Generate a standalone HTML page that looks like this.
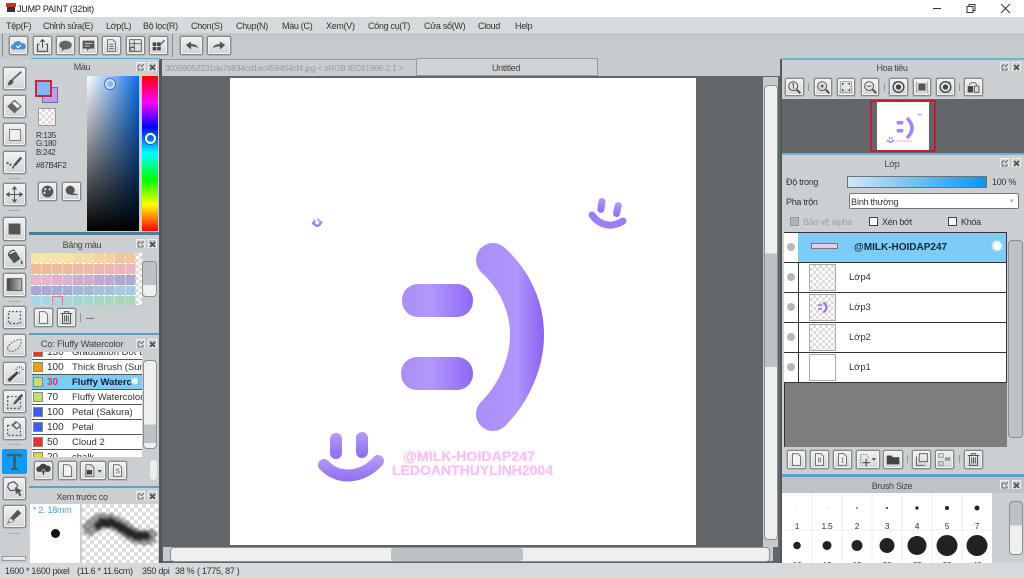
<!DOCTYPE html>
<html><head><meta charset="utf-8"><style>
html,body{margin:0;padding:0}
body{width:1024px;height:578px;overflow:hidden;position:relative;background:#c5cacd;font-family:"Liberation Sans","Noto Sans CJK JP",sans-serif;font-size:9px;letter-spacing:-.3px;color:#333}
.a{position:absolute}
.t{position:absolute;white-space:nowrap;line-height:12px}
.b{position:absolute;box-sizing:border-box;border:1px solid #83888b;border-radius:2px;background:linear-gradient(#f2f3f3,#d0d3d5);box-shadow:inset 0 0 0 1px #f4f4f4,0 0 0 1px rgba(130,135,138,.35)}
.b svg,.s svg{position:absolute;left:0;top:0;width:100%;height:100%}
.chk{background-color:#fff;background-image:linear-gradient(45deg,#ddd 25%,transparent 25%,transparent 75%,#ddd 75%),linear-gradient(45deg,#ddd 25%,transparent 25%,transparent 75%,#ddd 75%);background-size:6px 6px;background-position:0 0,3px 3px}
.title{position:absolute;text-align:center;color:#444;line-height:14px}
.pb{position:absolute;width:9px;height:9px;background:#d6dadc;border:1px solid #eee;box-sizing:border-box}
.row{position:absolute;left:32px;width:110px;height:15px;background:#fff;border-bottom:1px solid #555;box-sizing:border-box;letter-spacing:0}
.row i{position:absolute;left:1px;top:2px;width:10px;height:10px;border:1px solid #888;box-sizing:border-box}
.row b{position:absolute;left:15px;top:2px;font-weight:normal;line-height:12px;font-size:10px}
.row u{position:absolute;left:40px;top:2px;text-decoration:none;line-height:12px;font-size:9.5px;white-space:nowrap;width:70px;overflow:hidden}
.l{position:absolute;left:784px;width:223px;height:30px;background:#fff;border-bottom:1px solid #333;box-sizing:border-box}
.l i{position:absolute;left:3px;top:10px;width:8px;height:8px;border-radius:50%;background:#b4b8ba}
.l s{position:absolute;left:14px;top:0;width:1px;height:30px;background:#333}
.l em{position:absolute;left:25px;top:1px;width:27px;height:27px;box-sizing:border-box;border:1px solid #aaa}
.l span{position:absolute;left:65px;top:9px;font-size:9.5px;color:#333;letter-spacing:-.1px}
.sc{position:absolute;border:1px solid #8b8f92;border-radius:4px;box-sizing:border-box;background:#eef0f0}
</style></head><body>

<!-- title bar -->
<div class="a" style="left:0;top:0;width:1024px;height:17px;background:#fff"></div>
<svg class="a" style="left:6px;top:3px" width="10" height="10"><rect x="0" y="0" width="10" height="4" fill="#c33"/><rect x="1" y="4" width="8" height="5" fill="#333"/></svg>
<div class="t" style="left:17px;top:3px;color:#222;letter-spacing:-.2px">JUMP PAINT (32bit)</div>
<svg class="a" style="left:930px;top:0" width="94" height="17" fill="none" stroke="#333"><path d="M3 8.500h8"/><path d="M37 6.500h6v6h-6zM39 6.500v-2h6v6h-2"/><path d="M71 4l9 9M80 4l-9 9"/></svg>

<!-- menu -->
<div class="a" style="left:0;top:17px;width:1024px;height:16px;background:#d6dadc"></div>
<div class="t" style="left:6px;top:20px">Tệp(F)</div>
<div class="t" style="left:43px;top:20px">Chỉnh sửa(E)</div>
<div class="t" style="left:106px;top:20px">Lớp(L)</div>
<div class="t" style="left:143px;top:20px">Bộ lọc(R)</div>
<div class="t" style="left:191px;top:20px">Chọn(S)</div>
<div class="t" style="left:236px;top:20px">Chụp(N)</div>
<div class="t" style="left:282px;top:20px">Màu (C)</div>
<div class="t" style="left:326px;top:20px">Xem(V)</div>
<div class="t" style="left:368px;top:20px">Công cụ(T)</div>
<div class="t" style="left:424px;top:20px">Cửa sổ(W)</div>
<div class="t" style="left:478px;top:20px">Cloud</div>
<div class="t" style="left:515px;top:20px">Help</div>

<!-- toolbar -->
<div class="a" style="left:2px;top:34px;width:1px;height:23px;background:#8a8e90"></div>
<div class="b" style="left:9px;top:36px;width:19px;height:19px"><svg viewBox="0 0 19 19"><path d="M4 14a3 3 0 0 1 0-6 5 5 0 0 1 9-1 3.500 3.500 0 0 1 2 7z" fill="#4a90d0"/><path d="M7 10l2 2 3-3" stroke="#fff" fill="none" stroke-width="1.300"/></svg></div>
<div class="b" style="left:33px;top:36px;width:19px;height:19px"><svg viewBox="0 0 19 19" fill="none" stroke="#333"><path d="M6 8H4v8h11V8h-2M9.500 12V3M7 5.500l2.500-2.500 2.500 2.500"/></svg></div>
<div class="b" style="left:56px;top:36px;width:19px;height:19px"><svg viewBox="0 0 19 19"><ellipse cx="9.500" cy="9" rx="7" ry="5" fill="#666"/><path d="M6 12l-1 4 5-3z" fill="#666"/></svg></div>
<div class="b" style="left:79px;top:36px;width:19px;height:19px"><svg viewBox="0 0 19 19"><path d="M3 4h13v9h-6l-2 3v-3H3z" fill="#555"/><path d="M5 7h9M5 10h6" stroke="#ddd"/></svg></div>
<div class="b" style="left:102px;top:36px;width:19px;height:19px"><svg viewBox="0 0 19 19" fill="none" stroke="#666"><path d="M5 3h6l3 3v10H5zM7 8h5M7 10.500h5M7 13h5"/></svg></div>
<div class="b" style="left:126px;top:36px;width:19px;height:19px"><svg viewBox="0 0 19 19" fill="none" stroke="#555"><path d="M3 3h13v13H3zM3 7.500h13M3 12h6M8 3v9"/><circle cx="6" cy="13.500" r="2.500"/></svg></div>
<div class="b" style="left:149px;top:36px;width:19px;height:19px"><svg viewBox="0 0 19 19"><path d="M3 6h4v4H3zM8 6h4v4H8zM3 11h4v4H3zM8 11h4v4H8z" fill="#444"/><path d="M11 8l5-5 1 1-5 5z" fill="#666"/></svg></div>
<div class="a" style="left:172px;top:34px;width:1px;height:23px;background:#8a8e90"></div>
<div class="b" style="left:180px;top:36px;width:23px;height:19px"><svg viewBox="0 0 23 19"><path d="M5 9l6-4v3c4 0 7 1 8 5-2-2-4-2.500-8-2.500V14z" fill="#555"/></svg></div>
<div class="b" style="left:207px;top:36px;width:24px;height:19px"><svg viewBox="0 0 24 19"><path d="M19 9l-6-4v3c-4 0-7 1-8 5 2-2 4-2.500 8-2.500V14z" fill="#555"/></svg></div>

<!-- left tool column -->
<div class="a" style="left:0;top:59px;width:29px;height:504px;background:#cbcfd2"></div>
<div class="b" style="left:3px;top:67px;width:23px;height:23px"><svg viewBox="0 0 23 23"><path d="M19 4L9 13" stroke="#666" stroke-width="2"/><path d="M4 19c1-5 3-7 6-6 1 3-1 6-6 6z" fill="#555"/></svg></div>
<div class="b" style="left:3px;top:95px;width:23px;height:23px"><svg viewBox="0 0 23 23"><path d="M11.500 4l8 7.500-8 7.500-8-7.500z" fill="#666"/><path d="M9 8l6 5.500 2.500-2.500-6-5z" fill="#f5f5f5"/></svg></div>
<div class="b" style="left:3px;top:123px;width:23px;height:23px"><svg viewBox="0 0 23 23"><rect x="6" y="6" width="12" height="12" fill="#eee" stroke="#777"/></svg></div>
<div class="b" style="left:3px;top:151px;width:23px;height:23px"><svg viewBox="0 0 23 23" fill="#555"><path d="M18 5l2 2-7 8-3 1 1-3z"/><circle cx="4" cy="12" r="1.200"/><circle cx="7" cy="14" r="1.200"/><circle cx="10" cy="17" r="1.200"/></svg></div>
<div class="a" style="left:9px;top:178px;width:11px;height:1px;background:#aaa"></div>
<div class="b" style="left:3px;top:183px;width:23px;height:23px"><svg viewBox="0 0 23 23" fill="#555"><path d="M11 5h1v13h-1zM5 11h13v1H5z"/><path d="M11.500 2l3 4h-6zM11.500 21l3-4h-6zM2 11.500l4-3v6zM21 11.500l-4-3v6z"/></svg></div>
<div class="a" style="left:9px;top:210px;width:11px;height:1px;background:#aaa"></div>
<div class="b" style="left:3px;top:217px;width:23px;height:24px"><svg viewBox="0 0 23 24"><rect x="5" y="6" width="13" height="12" fill="#555"/></svg></div>
<div class="b" style="left:3px;top:245px;width:23px;height:24px"><svg viewBox="0 0 23 24"><path d="M4 10l7 9 7-5-5-8z" fill="#555"/><path d="M5 10c0-4 4-6 7-5" fill="none" stroke="#555" stroke-width="1.500"/><path d="M19 15c1 2 2 3 1 5-2 0-2-3-1-5z" fill="#555"/></svg></div>
<div class="b" style="left:3px;top:273px;width:23px;height:24px"><svg viewBox="0 0 23 24"><defs><linearGradient id="g1"><stop offset="0" stop-color="#444"/><stop offset="1" stop-color="#bbb"/></linearGradient></defs><rect x="3.500" y="5" width="16" height="13" fill="url(#g1)" stroke="#555"/></svg></div>
<div class="a" style="left:9px;top:301px;width:11px;height:1px;background:#aaa"></div>
<div class="b" style="left:3px;top:306px;width:23px;height:23px"><svg viewBox="0 0 23 23"><rect x="5" y="5" width="13" height="13" fill="none" stroke="#555" stroke-dasharray="2 2" stroke-width="1.500"/></svg></div>
<div class="b" style="left:3px;top:334px;width:23px;height:23px"><svg viewBox="0 0 23 23"><path d="M4 15c0-5 9-10 14-10 3 3-2 12-9 13-3 0-5-1-5-3z" fill="none" stroke="#777" stroke-dasharray="2 1.500" stroke-width="1.300"/></svg></div>
<div class="b" style="left:3px;top:362px;width:23px;height:23px"><svg viewBox="0 0 23 23"><path d="M4 18L14 9l2 2-10 10z" fill="#444"/><path d="M17 3v3M17 9v3M12 7h3M19 7h3M14 4l1.500 1.500M20 4l-1.500 1.500" stroke="#888"/></svg></div>
<div class="b" style="left:3px;top:390px;width:23px;height:23px"><svg viewBox="0 0 23 23"><rect x="4" y="6" width="14" height="13" fill="none" stroke="#555" stroke-dasharray="2 2" stroke-width="1.300"/><path d="M19 3l2 2-8 9-3 1 1-3z" fill="#555"/></svg></div>
<div class="b" style="left:3px;top:417px;width:23px;height:23px"><svg viewBox="0 0 23 23"><rect x="4" y="8" width="14" height="11" fill="none" stroke="#555" stroke-dasharray="2 2" stroke-width="1.300"/><path d="M13 3l6 5-5 5-6-5z" fill="#666"/><path d="M14 5l3 3-3 3-3-3z" fill="#eee"/></svg></div>
<div class="a" style="left:9px;top:444px;width:11px;height:1px;background:#aaa"></div>
<div class="a" style="left:2px;top:449px;width:25px;height:25px;background:#0f9bf2;border-radius:2px"></div>
<svg class="a" style="left:2px;top:449px" width="25" height="25"><path d="M5 5h15v3h-2l-1-1h-3v12h2v2H9v-2h2V7H8L7 8H5z" fill="#4a5a66"/></svg>
<div class="b" style="left:3px;top:477px;width:23px;height:23px"><svg viewBox="0 0 23 23"><path d="M5 6l6-2 4 4-2 5-6 1-3-4z" fill="none" stroke="#555" stroke-width="1.300"/><path d="M12 10l8 4-3 1 2 4-2 1-2-4-2 2z" fill="#555"/></svg></div>
<div class="b" style="left:3px;top:505px;width:23px;height:23px"><svg viewBox="0 0 23 23"><path d="M4 19l3-6 8-9 4 4-9 8z" fill="#555"/><path d="M4 19l3-6 4 3z" fill="#f3f3f3" stroke="#555" stroke-width=".7"/></svg></div>
<div class="a" style="left:9px;top:533px;width:11px;height:1px;background:#aaa"></div>
<div class="a" style="left:2px;top:556px;width:24px;height:5px;background:#e8eaea;border:1px solid #999;box-sizing:border-box"></div>

<!-- left panels bg -->
<div class="a" style="left:29px;top:59px;width:131px;height:504px;background:#cbcfd2"></div>
<div class="a" style="left:31px;top:58px;width:128px;height:1px;background:#5ea6cf"></div>
<div class="a" style="left:159px;top:59px;width:3px;height:504px;background:#54585a"></div>

<!-- colour panel -->
<div class="title" style="left:29px;top:60px;width:106px">Màu</div>
<div class="pb" style="left:136px;top:62px"></div><div class="pb" style="left:148px;top:62px;background:#c4c8ca"></div>
<svg class="a" style="left:136px;top:62px" width="23" height="10" fill="none" stroke="#666"><path d="M2 3h3M2 3v5h5V6M5 5l3-3"/><path d="M14 3l5 5M19 3l-5 5" stroke="#444" stroke-width="1.500"/></svg>
<div class="a" style="left:42px;top:87px;width:16px;height:16px;background:#bd9cf3;border:1px solid #7a6a8e;box-sizing:border-box"></div>
<div class="a chk" style="left:38px;top:108px;width:18px;height:18px;border:1px solid #999;box-sizing:border-box"></div>
<div class="a" style="left:35px;top:80px;width:17px;height:17px;background:#87b4f2;border:2px solid #c3283c;box-sizing:border-box"></div>
<div class="t" style="left:36px;top:132px;font-size:8px;line-height:8.300px;white-space:normal;width:30px">R:135<br>G:180<br>B:242</div>
<div class="t" style="left:36px;top:160px;font-size:8px">#87B4F2</div>
<div class="b" style="left:38px;top:182px;width:19px;height:19px"><svg viewBox="0 0 19 19"><circle cx="9.500" cy="9.500" r="6.500" fill="#555"/><circle cx="7" cy="7" r="1.300" fill="#ddd"/><circle cx="12" cy="7" r="1.300" fill="#ddd"/><circle cx="6" cy="11" r="1.300" fill="#ddd"/></svg></div>
<div class="b" style="left:62px;top:182px;width:19px;height:19px"><svg viewBox="0 0 19 19"><circle cx="8" cy="8" r="5" fill="#555"/><path d="M9 12h7v1.500H9z" fill="#555"/></svg></div>
<div class="a" style="left:87px;top:76px;width:52px;height:155px;background:linear-gradient(to top,#000,rgba(0,0,0,0)),linear-gradient(to right,#fff,#0a6de6)"></div>
<div class="a" style="left:105px;top:79px;width:10px;height:10px;border:2px solid #cfe0f8;border-radius:50%;box-sizing:border-box;box-shadow:0 0 0 1px #4a77b5"></div>
<div class="a" style="left:142px;top:76px;width:16px;height:155px;background:linear-gradient(#f00,#f0f 17%,#00f 33%,#0ff 50%,#0f0 67%,#ff0 83%,#f00)"></div>
<div class="a" style="left:145px;top:133px;width:11px;height:11px;border:2px solid #fff;border-radius:50%;box-sizing:border-box;box-shadow:0 0 0 1px #06a"></div>

<!-- swatches -->
<div class="a" style="left:29px;top:232px;width:130px;height:3px;background:#4f7c98"></div>
<div class="title" style="left:29px;top:238px;width:106px">Bảng màu</div>
<div class="pb" style="left:136px;top:239px"></div><div class="pb" style="left:148px;top:239px;background:#c4c8ca"></div>
<svg class="a" style="left:136px;top:239px" width="23" height="10" fill="none" stroke="#666"><path d="M2 3h3M2 3v5h5V6M5 5l3-3"/><path d="M14 3l5 5M19 3l-5 5" stroke="#444" stroke-width="1.500"/></svg>
<div class="a chk" style="left:31px;top:253px;width:111px;height:52px"></div>
<svg class="a" style="left:31px;top:253px" width="106" height="52" shape-rendering="crispEdges">
<g fill="#f4e6a8"><rect x="0" y="0" width="10" height="10"/><rect x="10.500" y="0" width="10" height="10"/></g>
<g fill="#f5e4a8"><rect x="21" y="0" width="10" height="10"/><rect x="31.500" y="0" width="10" height="10"/></g>
<g fill="#f4dca4"><rect x="42" y="0" width="10" height="10"/><rect x="52.500" y="0" width="10" height="10"/></g>
<g fill="#f2d4a2"><rect x="63" y="0" width="10" height="10"/><rect x="73.500" y="0" width="10" height="10"/></g>
<g fill="#f0c8a0"><rect x="84" y="0" width="10" height="10"/><rect x="94.500" y="0" width="10" height="10"/></g>
<g fill="#f0bc9c"><rect x="0" y="11" width="10" height="10"/><rect x="10.500" y="11" width="10" height="10"/></g>
<g fill="#f0bca0"><rect x="21" y="11" width="10" height="10"/><rect x="31.500" y="11" width="10" height="10"/></g>
<g fill="#efb9a8"><rect x="42" y="11" width="10" height="10"/><rect x="52.500" y="11" width="10" height="10"/></g>
<g fill="#edb6b0"><rect x="63" y="11" width="10" height="10"/><rect x="73.500" y="11" width="10" height="10"/></g>
<g fill="#ebb6c0"><rect x="84" y="11" width="10" height="10"/><rect x="94.500" y="11" width="10" height="10"/></g>
<g fill="#e7b6cc"><rect x="0" y="22" width="10" height="10"/><rect x="10.500" y="22" width="10" height="10"/></g>
<g fill="#dcb4d0"><rect x="21" y="22" width="10" height="10"/><rect x="31.500" y="22" width="10" height="10"/></g>
<g fill="#ccaed0"><rect x="42" y="22" width="10" height="10"/><rect x="52.500" y="22" width="10" height="10"/></g>
<g fill="#bcaad0"><rect x="63" y="22" width="10" height="10"/><rect x="73.500" y="22" width="10" height="10"/></g>
<g fill="#aca8d0"><rect x="84" y="22" width="10" height="10"/><rect x="94.500" y="22" width="10" height="10"/></g>
<g fill="#a8a8d2"><rect x="0" y="33" width="10" height="9"/><rect x="10.500" y="33" width="10" height="9"/></g>
<g fill="#a4aed6"><rect x="21" y="33" width="10" height="9"/><rect x="31.500" y="33" width="10" height="9"/></g>
<g fill="#a4b8da"><rect x="42" y="33" width="10" height="9"/><rect x="52.500" y="33" width="10" height="9"/></g>
<g fill="#a4c2de"><rect x="63" y="33" width="10" height="9"/><rect x="73.500" y="33" width="10" height="9"/></g>
<g fill="#a4cce4"><rect x="84" y="33" width="10" height="9"/><rect x="94.500" y="33" width="10" height="9"/></g>
<g fill="#a4d8e6"><rect x="0" y="43" width="10" height="9"/><rect x="10.500" y="43" width="10" height="9"/></g>
<g fill="#a4d8dc"><rect x="21" y="43" width="10" height="9"/><rect x="31.500" y="43" width="10" height="9"/></g>
<g fill="#a4d8d0"><rect x="42" y="43" width="10" height="9"/><rect x="52.500" y="43" width="10" height="9"/></g>
<g fill="#a6d8c4"><rect x="63" y="43" width="10" height="9"/><rect x="73.500" y="43" width="10" height="9"/></g>
<g fill="#a8d8b8"><rect x="84" y="43" width="10" height="9"/><rect x="94.500" y="43" width="10" height="9"/></g>
<path d="M21.500 52V43.500h10V52" fill="none" stroke="#e07a8a"/>
</svg>
<div class="sc" style="left:142px;top:261px;width:15px;height:36px;background:linear-gradient(#bec2c5 68%,#eef0f0 68%)"></div>
<div class="b" style="left:34px;top:308px;width:19px;height:19px"><svg viewBox="0 0 19 19" fill="#f3f3f3" stroke="#666"><path d="M5 3h6l3 3v10H5z"/></svg></div>
<div class="b" style="left:57px;top:308px;width:19px;height:19px"><svg viewBox="0 0 19 19" fill="none" stroke="#444"><path d="M3 5h13M7 5V3h5v2M5 5v11h9V5M7.500 7v7M9.500 7v7M11.500 7v7"/></svg></div>
<div class="a" style="left:80px;top:313px;width:1px;height:9px;background:#999"></div>
<div class="t" style="left:86px;top:312px;font-size:9px">---</div>

<!-- brushes -->
<div class="a" style="left:29px;top:333px;width:130px;height:2px;background:#5e9fc4"></div>
<div class="title" style="left:29px;top:338px;width:106px;font-size:9.500px">Cọ: Fluffy Watercolor</div>
<div class="pb" style="left:136px;top:339px"></div><div class="pb" style="left:148px;top:339px;background:#c4c8ca"></div>
<svg class="a" style="left:136px;top:339px" width="23" height="10" fill="none" stroke="#666"><path d="M2 3h3M2 3v5h5V6M5 5l3-3"/><path d="M14 3l5 5M19 3l-5 5" stroke="#444" stroke-width="1.500"/></svg>
<div class="a" style="left:32px;top:352px;width:110px;height:105px;overflow:hidden;background:#fff">
<div class="row" style="left:0;top:-7px"><i style="background:#e33"></i><b>130</b><u>Graduation Dot Bi</u></div>
<div class="row" style="left:0;top:8px"><i style="background:#f5a000"></i><b>100</b><u>Thick Brush (Sum</u></div>
<div class="row" style="left:0;top:23px;background:#7dccf8"><i style="background:#bfe36a"></i><b style="color:#d83a4a;font-weight:bold">30</b><u style="font-weight:bold;color:#123">Fluffy Waterc</u><span class="a" style="left:98px;top:2px;color:#fff;font-size:11px;line-height:11px">✸</span></div>
<div class="row" style="left:0;top:38px"><i style="background:#bfe36a"></i><b>70</b><u>Fluffy Watercolor</u></div>
<div class="row" style="left:0;top:53px"><i style="background:#3a5cf0"></i><b>100</b><u>Petal (Sakura)</u></div>
<div class="row" style="left:0;top:68px"><i style="background:#3a5cf0"></i><b>100</b><u>Petal</u></div>
<div class="row" style="left:0;top:83px"><i style="background:#f03030"></i><b>50</b><u>Cloud 2</u></div>
<div class="row" style="left:0;top:98px"><i style="background:#e8d820"></i><b>20</b><u>chalk</u></div>
</div>
<div class="sc" style="left:143px;top:360px;width:14px;height:89px;background:linear-gradient(#eef0f0 73%,#bec2c5 73%,#bec2c5 94%,#eef0f0 94%)"></div>
<div class="b" style="left:34px;top:461px;width:19px;height:19px"><svg viewBox="0 0 19 19"><path d="M4 11a3 3 0 0 1 1-6 4.500 4.500 0 0 1 8-1 3.500 3.500 0 0 1 2 7z" fill="#444"/><path d="M9.500 8l3 4h-2v3h-2v-3h-2z" fill="#444" stroke="#eee" stroke-width=".6"/></svg></div>
<div class="b" style="left:58px;top:461px;width:19px;height:19px"><svg viewBox="0 0 19 19" fill="#f3f3f3" stroke="#666"><path d="M5 3h6l3 3v10H5z"/></svg></div>
<div class="b" style="left:80px;top:461px;width:26px;height:19px"><svg viewBox="0 0 26 19"><path d="M5 3h6l3 3v10H5z" fill="#ddd" stroke="#666"/><rect x="6" y="9" width="6" height="5" fill="#444"/><path d="M18 9h5l-2.500 3z" fill="#555"/></svg></div>
<div class="b" style="left:108px;top:461px;width:19px;height:19px"><svg viewBox="0 0 19 19"><path d="M5 3h6l3 3v10H5z" fill="#eee" stroke="#666"/><text x="9.500" y="13" font-size="8" text-anchor="middle" fill="#555" font-family="Liberation Sans">S</text></svg></div>
<div class="sc" style="left:150px;top:460px;width:7px;height:20px;border:none;background:#eceeee"></div>

<!-- preview -->
<div class="a" style="left:29px;top:486px;width:130px;height:2px;background:#5e9fc4"></div>
<div class="title" style="left:29px;top:490px;width:106px">Xem trước cọ</div>
<div class="pb" style="left:136px;top:491px"></div><div class="pb" style="left:148px;top:491px;background:#c4c8ca"></div>
<svg class="a" style="left:136px;top:491px" width="23" height="10" fill="none" stroke="#666"><path d="M2 3h3M2 3v5h5V6M5 5l3-3"/><path d="M14 3l5 5M19 3l-5 5" stroke="#444" stroke-width="1.500"/></svg>
<div class="a" style="left:30px;top:504px;width:50px;height:59px;background:#fff"></div>
<div class="t" style="left:33px;top:504px;color:#4aa3d8;font-size:9px">* 2. 18mm</div>
<div class="a" style="left:51px;top:529px;width:9px;height:9px;border-radius:50%;background:#111"></div>
<div class="a chk" style="left:82px;top:504px;width:76px;height:59px;background-size:8px 8px;background-position:0 0,4px 4px"></div>
<svg class="a" style="left:82px;top:504px" width="76" height="59"><defs><filter id="f" x="-20%" y="-50%" width="140%" height="200%"><feTurbulence type="fractalNoise" baseFrequency=".25" numOctaves="2" seed="4"/><feDisplacementMap in="SourceGraphic" scale="7"/><feGaussianBlur stdDeviation="1.300"/></filter></defs><path d="M8 24C16 15 28 14 40 23S58 36 68 32" fill="none" stroke="#555" stroke-width="15" stroke-linecap="round" filter="url(#f)" opacity=".6"/><path d="M16 21C22 17 30 17 40 24S56 34 64 32" fill="none" stroke="#111" stroke-width="8" stroke-linecap="round" filter="url(#f)" opacity=".8"/></svg>

<!-- status bar -->
<div class="a" style="left:0;top:563px;width:1024px;height:15px;background:#d6dadc"></div>
<div class="t" style="left:5px;top:565px">1600 * 1600 pixel</div>
<div class="t" style="left:77px;top:565px">(11.6 * 11.6cm)</div>
<div class="t" style="left:142px;top:565px">350 dpi</div>
<div class="t" style="left:175px;top:565px">38 %</div>
<div class="t" style="left:197px;top:565px">( 1775, 87 )</div>

<!-- canvas area -->
<div class="a" style="left:162px;top:59px;width:618px;height:18px;background:#c5cacd"></div>
<div class="a" style="left:162px;top:59px;width:254px;height:17px;background:#c9cdd0;border-top:1px solid #999;box-sizing:border-box"></div>
<div class="t" style="left:165px;top:62px;color:#989ca0;font-size:8.500px">30399052231da7b834cd1ec459454cf4.jpg &lt; sRGB IEC61966-2.1 &gt;</div>
<div class="a" style="left:416px;top:58px;width:182px;height:18px;background:#cfd3d5;border:1px solid #999;border-radius:2px 2px 0 0;box-sizing:border-box"></div>
<div class="t" style="left:416px;top:62px;width:180px;text-align:center;color:#444">Untitled</div>
<div class="a" style="left:162px;top:76px;width:618px;height:487px;background:#636668"></div>
<div class="a" style="left:230px;top:78px;width:466px;height:467px;background:#fff"></div>

<!-- artwork -->
<svg class="a" style="left:230px;top:78px" width="466" height="467" viewBox="230 78 466 467">
<defs>
<linearGradient id="p" gradientUnits="userSpaceOnUse" x1="476" y1="0" x2="544" y2="0"><stop offset="0" stop-color="#a98ef8"/><stop offset=".6" stop-color="#b095fb"/><stop offset="1" stop-color="#8a62f5"/></linearGradient>
<linearGradient id="q"><stop offset="0" stop-color="#a88ef5"/><stop offset=".4" stop-color="#b299fb"/><stop offset="1" stop-color="#8d68f5"/></linearGradient>
<linearGradient id="r" x1="0" y1="0" x2="0" y2="1"><stop offset="0" stop-color="#b49bf8"/><stop offset="1" stop-color="#8e6cf2"/></linearGradient>
<linearGradient id="m" gradientUnits="userSpaceOnUse" x1="0" y1="458" x2="0" y2="482"><stop offset="0" stop-color="#b49bf8"/><stop offset="1" stop-color="#8e6cf2"/></linearGradient>
</defs>
<path d="M493 260C516 281 527 308 527 335S515 392 493 414" fill="none" stroke="url(#p)" stroke-width="34" stroke-linecap="round"/>
<rect x="402" y="284" width="71" height="33" rx="16" fill="url(#q)"/>
<rect x="401" y="357" width="72" height="33" rx="16" fill="url(#q)"/>
<rect x="330" y="433" width="12" height="26" rx="6" fill="url(#r)"/>
<rect x="356" y="432" width="12" height="26" rx="6" fill="url(#r)"/>
<path d="M324 465C338 480 362 479 378 461" fill="none" stroke="url(#m)" stroke-width="12" stroke-linecap="round"/>
<rect x="598" y="198" width="7" height="15" rx="3.500" fill="url(#r)" transform="rotate(8 602 205)"/>
<rect x="614" y="202" width="7" height="15" rx="3.500" fill="url(#r)" transform="rotate(12 617 209)"/>
<path d="M592 215C600 226 612 228 623 221" fill="none" stroke="#9c7ef5" stroke-width="7" stroke-linecap="round"/>
<path d="M313 223Q318 229 321 222" fill="none" stroke="#9c7ef5" stroke-width="2.500" stroke-linecap="round"/>
<path d="M314 220l1 2M318 219l1 2" stroke="#9c7ef5" stroke-width="1.500" stroke-linecap="round"/>
<text x="403" y="461" textLength="132" lengthAdjust="spacingAndGlyphs" font-family="Liberation Sans" font-weight="bold" font-size="14" fill="#fdbff4" stroke="#fdbff4" stroke-width=".3" letter-spacing="0">@MILK-HOIDAP247</text>
<text x="392" y="475" textLength="161" lengthAdjust="spacingAndGlyphs" font-family="Liberation Sans" font-weight="bold" font-size="14" fill="#fdbff4" stroke="#fdbff4" stroke-width=".3" letter-spacing="0">LEDOANTHUYLINH2004</text>
</svg>

<!-- canvas scrollbars -->
<div class="a" style="left:763px;top:77px;width:15px;height:470px;background:#c5cacd"></div>
<div class="sc" style="left:764px;top:85px;width:14px;height:455px;background:linear-gradient(#eef0f0 37%,#bec2c5 37%,#bec2c5 62%,#eef0f0 62%)"></div>
<div class="a" style="left:163px;top:547px;width:610px;height:15px;background:#c5cacd;border-bottom:1px solid #666;box-sizing:border-box"></div>
<div class="sc" style="left:170px;top:547px;width:600px;height:15px;background:#eef0f0"></div>
<div class="a" style="left:391px;top:548px;width:132px;height:13px;background:#bdc1c4;border-radius:3px"></div>

<!-- right column -->
<div class="a" style="left:780px;top:59px;width:2px;height:504px;background:#54585a"></div>
<div class="a" style="left:782px;top:59px;width:242px;height:504px;background:#cbcfd2"></div>
<div class="a" style="left:782px;top:58px;width:242px;height:2px;background:#6fb0d8"></div>
<div class="title" style="left:782px;top:61px;width:220px">Hoa tiêu</div>
<div class="pb" style="left:1000px;top:62px"></div><div class="pb" style="left:1012px;top:62px;background:#c4c8ca"></div>
<svg class="a" style="left:1000px;top:62px" width="23" height="10" fill="none" stroke="#666"><path d="M2 3h3M2 3v5h5V6M5 5l3-3"/><path d="M14 3l5 5M19 3l-5 5" stroke="#444" stroke-width="1.500"/></svg>
<div class="b" style="left:785px;top:78px;width:19px;height:18px"><svg viewBox="0 0 19 18" fill="none" stroke="#444"><circle cx="8" cy="8" r="5"/><path d="M12 12l4 4" stroke-width="2"/><path d="M7 6l1.200-1v6"/></svg></div>
<div class="a" style="left:808px;top:83px;width:1px;height:8px;background:#999"></div>
<div class="b" style="left:814px;top:78px;width:18px;height:18px"><svg viewBox="0 0 18 18" fill="none" stroke="#444"><circle cx="8" cy="8" r="5"/><path d="M12 12l4 4" stroke-width="2"/><path d="M5.500 8h5M8 5.500v5"/></svg></div>
<div class="b" style="left:837px;top:78px;width:18px;height:18px"><svg viewBox="0 0 18 18" fill="none" stroke="#555"><path d="M3 3h12v12H3z" stroke="#999"/><path d="M5 7V5h2M11 5h2v2M13 11v2h-2M7 13H5v-2"/></svg></div>
<div class="b" style="left:861px;top:78px;width:18px;height:18px"><svg viewBox="0 0 18 18" fill="none" stroke="#444"><circle cx="8" cy="8" r="5"/><path d="M12 12l4 4" stroke-width="2"/><path d="M5.500 8h5"/></svg></div>
<div class="a" style="left:884px;top:83px;width:1px;height:8px;background:#999"></div>
<div class="b" style="left:889px;top:78px;width:19px;height:18px"><svg viewBox="0 0 19 18"><circle cx="9.500" cy="9" r="6" fill="none" stroke="#444" stroke-width="1.500"/><circle cx="9.500" cy="9" r="3" fill="#444"/><path d="M4 3l3 1-2 2z" fill="#444"/></svg></div>
<div class="b" style="left:913px;top:78px;width:18px;height:18px"><svg viewBox="0 0 18 18"><rect x="5" y="5" width="8" height="8" fill="#555"/><path d="M3 3v12M15 3v12" stroke="#999"/></svg></div>
<div class="b" style="left:936px;top:78px;width:19px;height:18px"><svg viewBox="0 0 19 18"><circle cx="9.500" cy="9" r="6" fill="none" stroke="#444" stroke-width="1.500"/><circle cx="9.500" cy="9" r="3" fill="#444"/><path d="M15 3l-3 1 2 2z" fill="#444"/></svg></div>
<div class="a" style="left:959px;top:83px;width:1px;height:8px;background:#999"></div>
<div class="b" style="left:964px;top:78px;width:19px;height:18px"><svg viewBox="0 0 19 18"><rect x="3" y="8" width="6" height="7" fill="#444"/><rect x="10.500" y="8" width="5" height="7" fill="none" stroke="#555"/><path d="M5 7c0-4 8-4 8 0" fill="none" stroke="#555"/></svg></div>
<div class="a" style="left:782px;top:99px;width:242px;height:54px;background:#636668"></div>
<div class="a" style="left:870px;top:100px;width:66px;height:52px;border:2px solid #c3202c;box-sizing:border-box;background:#636668"></div>
<svg class="a" style="left:877px;top:102px" width="52" height="48"><rect width="52" height="48" fill="#fff"/><path d="M31 17Q39 26 31 35" fill="none" stroke="#a184f6" stroke-width="3.500" stroke-linecap="round"/><rect x="19.500" y="19" width="7" height="3.500" rx="1.700" fill="#a184f6"/><rect x="19.500" y="27" width="7" height="3.500" rx="1.700" fill="#a184f6"/><path d="M10.500 38.500q3 3 6 0" fill="none" stroke="#a184f6" stroke-width="1.500" stroke-linecap="round"/><rect x="12" y="35" width="1.200" height="2.500" fill="#a184f6"/><rect x="14.500" y="35" width="1.200" height="2.500" fill="#a184f6"/><rect x="18" y="38" width="17" height="2" fill="#fbd4f6"/><path d="M41 12q2 2 3.500 0" fill="none" stroke="#a184f6"/></svg>

<!-- layer panel -->
<div class="a" style="left:782px;top:153px;width:242px;height:2px;background:#6fb0d8"></div>
<div class="title" style="left:782px;top:157px;width:220px">Lớp</div>
<div class="pb" style="left:1000px;top:158px"></div><div class="pb" style="left:1012px;top:158px;background:#c4c8ca"></div>
<svg class="a" style="left:1000px;top:158px" width="23" height="10" fill="none" stroke="#666"><path d="M2 3h3M2 3v5h5V6M5 5l3-3"/><path d="M14 3l5 5M19 3l-5 5" stroke="#444" stroke-width="1.500"/></svg>
<div class="t" style="left:786px;top:176px">Độ trong</div>
<div class="a" style="left:847px;top:176px;width:140px;height:12px;border:1px solid #6f7376;box-sizing:border-box;background:linear-gradient(to right,#cfe8f6,#0b95ee)"></div>
<div class="t" style="left:992px;top:176px">100 %</div>
<div class="t" style="left:786px;top:196px">Pha trộn</div>
<div class="a" style="left:849px;top:193px;width:170px;height:16px;background:#fff;border:1px solid #777;border-radius:2px;box-sizing:border-box"></div>
<div class="t" style="left:851px;top:196px">Bình thường</div>
<div class="t" style="left:1010px;top:196px;color:#aaa;font-size:7px">▾</div>
<div class="a" style="left:790px;top:217px;width:9px;height:9px;background:#b0b4b6;border:1px solid #999;box-sizing:border-box"></div>
<div class="t" style="left:803px;top:216px;color:#a0a4a6">Bảo vệ alpha</div>
<div class="a" style="left:869px;top:217px;width:9px;height:9px;background:#fff;border:1px solid #444;box-sizing:border-box"></div>
<div class="t" style="left:882px;top:216px">Xén bớt</div>
<div class="a" style="left:948px;top:217px;width:9px;height:9px;background:#fff;border:1px solid #444;box-sizing:border-box"></div>
<div class="t" style="left:961px;top:216px">Khóa</div>

<div class="a" style="left:784px;top:232px;width:223px;height:215px;background:#7d7d7d;border-top:1px solid #333;border-left:1px solid #333;box-sizing:border-box"></div>
<div class="l" style="top:233px"><i></i><s></s><span class="a" style="left:14px;top:0;width:209px;height:29px;background:#7dccf8"></span><em style="left:27px;top:10px;width:27px;height:6px;background:#e8c8ee;border-color:#777"></em><span style="left:70px;font-weight:bold;color:#0f2a3a;top:9px;font-size:10px;letter-spacing:0">@MILK-HOIDAP247</span><span style="left:206px;top:5px;color:#fff;font-size:17px;line-height:18px">✹</span></div>
<div class="l" style="top:263px"><i></i><s></s><em class="chk"></em><span>Lớp4</span></div>
<div class="l" style="top:293px"><i></i><s></s><em class="chk"></em><span>Lớp3</span></div>
<svg class="a" style="left:809px;top:294px" width="27" height="27"><path d="M15 9q5 4 0 9" fill="none" stroke="#8e6cf2" stroke-width="2" stroke-linecap="round"/><path d="M9 11h4M9 15h4" stroke="#8e6cf2" stroke-width="1.500"/></svg>
<div class="l" style="top:323px"><i></i><s></s><em class="chk"></em><span>Lớp2</span></div>
<div class="l" style="top:353px"><i></i><s></s><em></em><span>Lớp1</span></div>
<div class="a" style="left:1006px;top:232px;width:1px;height:150px;background:#333"></div>
<div class="sc" style="left:1008px;top:240px;width:15px;height:198px;background:#bec2c5"></div>

<div class="b" style="left:787px;top:450px;width:19px;height:19px"><svg viewBox="0 0 19 19" fill="#f3f3f3" stroke="#666"><path d="M5 3h6l3 3v10H5z"/></svg></div>
<div class="b" style="left:810px;top:450px;width:19px;height:19px"><svg viewBox="0 0 19 19"><path d="M5 3h6l3 3v10H5z" fill="#f3f3f3" stroke="#666"/><text x="9.500" y="13" font-size="8" text-anchor="middle" fill="#555" font-family="Liberation Sans">8</text></svg></div>
<div class="b" style="left:833px;top:450px;width:19px;height:19px"><svg viewBox="0 0 19 19"><path d="M5 3h6l3 3v10H5z" fill="#f3f3f3" stroke="#666"/><text x="9.500" y="13" font-size="8" text-anchor="middle" fill="#555" font-family="Liberation Sans">1</text></svg></div>
<div class="b" style="left:856px;top:450px;width:24px;height:19px"><svg viewBox="0 0 24 19"><path d="M4 14V4h6l2 2v3" fill="none" stroke="#888" stroke-dasharray="2 1"/><path d="M10 9v8M6 13h8" stroke="#555" stroke-width="1.300"/><path d="M16 8h5l-2.500 3z" fill="#555"/></svg></div>
<div class="b" style="left:883px;top:450px;width:20px;height:19px"><svg viewBox="0 0 20 19"><path d="M3 5h5l2 2h7v8H3z" fill="#444"/></svg></div>
<div class="a" style="left:907px;top:455px;width:1px;height:8px;background:#999"></div>
<div class="b" style="left:912px;top:450px;width:19px;height:19px"><svg viewBox="0 0 19 19" fill="none" stroke="#555"><path d="M7 3h9v9H7zM4 6v10h9"/></svg></div>
<div class="b" style="left:935px;top:450px;width:19px;height:19px"><svg viewBox="0 0 19 19"><rect x="3" y="3" width="5" height="4" fill="none" stroke="#888"/><rect x="3" y="12" width="5" height="4" fill="none" stroke="#888"/><rect x="10" y="7" width="6" height="4" fill="#999"/></svg></div>
<div class="a" style="left:959px;top:455px;width:1px;height:8px;background:#999"></div>
<div class="b" style="left:964px;top:450px;width:19px;height:19px"><svg viewBox="0 0 19 19" fill="none" stroke="#444"><path d="M3 5h13M7 5V3h5v2M5 5v11h9V5M7.500 7v7M9.500 7v7M11.500 7v7"/></svg></div>

<!-- brush size panel -->
<div class="a" style="left:782px;top:474px;width:242px;height:3px;background:#5e9fc4"></div>
<div class="a" style="left:782px;top:477px;width:242px;height:16px;background:#bfc3c6"></div>
<div class="title" style="left:782px;top:479px;width:220px">Brush Size</div>
<div class="pb" style="left:1000px;top:480px"></div><div class="pb" style="left:1012px;top:480px;background:#c4c8ca"></div>
<svg class="a" style="left:1000px;top:480px" width="23" height="10" fill="none" stroke="#666"><path d="M2 3h3M2 3v5h5V6M5 5l3-3"/><path d="M14 3l5 5M19 3l-5 5" stroke="#444" stroke-width="1.500"/></svg>
<svg class="a" style="left:782px;top:493px" width="210" height="70" font-family="Liberation Sans" font-size="8.500" fill="#333" text-anchor="middle">
<rect width="210" height="70" fill="#fff"/>
<path d="M30 0v70M60 0v70M90 0v70M120 0v70M150 0v70M180 0v70M0 37h210" stroke="#eceeee"/>
<g fill="#222"><circle cx="15" cy="15" r=".4" fill="#bbb"/><circle cx="45" cy="15" r=".5" fill="#999"/><circle cx="75" cy="15" r=".8"/><circle cx="105" cy="15" r="1"/><circle cx="135" cy="15" r="1.600"/><circle cx="165" cy="15" r="2"/><circle cx="195" cy="15" r="2.500"/>
<circle cx="15" cy="52.500" r="3.800"/><circle cx="45" cy="52.500" r="4.500"/><circle cx="75" cy="52.500" r="5.500"/><circle cx="105" cy="52.500" r="7.500"/><circle cx="135" cy="52.500" r="9.500"/><circle cx="165" cy="52.500" r="10.500"/><circle cx="195" cy="52.500" r="10.500"/></g>
<text x="15" y="36">1</text><text x="45" y="36">1.5</text><text x="75" y="36">2</text><text x="105" y="36">3</text><text x="135" y="36">4</text><text x="165" y="36">5</text><text x="195" y="36">7</text>
<text x="15" y="75">10</text><text x="45" y="75">12</text><text x="75" y="75">15</text><text x="105" y="75">20</text><text x="135" y="75">25</text><text x="165" y="75">30</text><text x="195" y="75">40</text>
</svg>
<div class="sc" style="left:1009px;top:501px;width:14px;height:54px;background:linear-gradient(#bec2c5 45%,#eef0f0 45%)"></div>
</body></html>
